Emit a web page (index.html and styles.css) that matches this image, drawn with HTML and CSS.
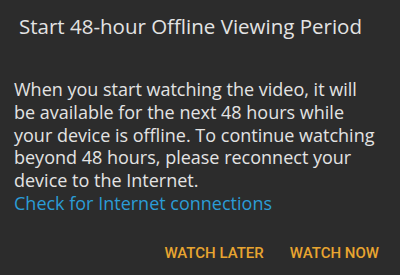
FILE: index.html
```html
<!DOCTYPE html>
<html>
<head>
<meta charset="utf-8">
<link rel="stylesheet" href="styles.css">
</head>
<body>
<div class="dialog">
  <h1 class="title">Start 48-hour Offline Viewing Period</h1>
  <p class="message">When you start watching the video, it will be available for the next 48 hours while your device is offline. To continue watching beyond 48 hours, please reconnect your device to the Internet.</p>
  <a class="link">Check for Internet connections</a>
  <div class="actions">
    <span class="btn">WATCH LATER</span>
    <span class="btn">WATCH NOW</span>
  </div>
</div>
</body>
</html>
```
FILE: styles.css
```css
html, body {
  margin: 0;
  padding: 0;
  background: #2c2c2c;
}
.dialog {
  width: 400px;
  height: 275px;
  box-sizing: border-box;
  padding: 14px 21px 0 14px;
  font-family: "Open Sans", "Noto Sans", sans-serif;
  color: #e3e3e3;
}
.title {
  margin: 0 0 0 5px;
  font-size: 20.5px;
  font-weight: 400;
  line-height: 24px;
}
.message {
  margin: 40px 0 0 0;
  font-size: 18px;
  line-height: 22.8px;
}
.link {
  display: block;
  font-size: 18px;
  line-height: 22.8px;
  color: #2b9cd6;
}
.actions {
  display: flex;
  justify-content: flex-end;
  gap: 26px;
  margin-top: 28px;
}
.btn {
  font-family: Roboto, "Open Sans", sans-serif;
  font-size: 15px;
  font-weight: 500;
  color: #e8a530;
  line-height: 20px;
}
```
